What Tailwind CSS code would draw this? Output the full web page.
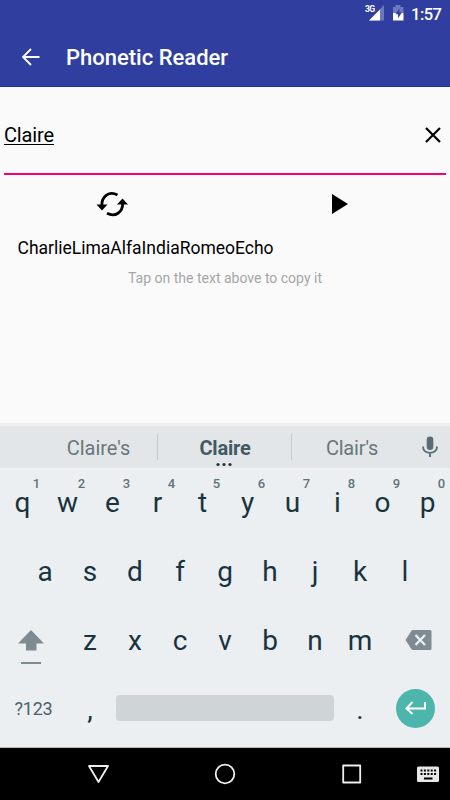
<!DOCTYPE html>
<html lang="en">
<head>
    <meta charset="UTF-8">
    <meta name="viewport" content="width=device-width, initial-scale=1.0">
    <title>Phonetic Reader</title>
    <script src="https://cdn.jsdelivr.net/npm/@tailwindcss/browser@4"></script>
</head>
<body class="font-['Roboto',sans-serif] bg-[#fafafa]">

    <div class="flex flex-col w-[450px] h-[800px] overflow-hidden">
        <!-- Status bar -->
        <div class="h-7 shrink-0 bg-[#303f9f] flex items-center justify-end text-white">
            <svg class="w-[76px] h-7" viewBox="0 0 76 28">
                <text x="30" y="12" font-size="8.5" font-weight="700" textLength="10" fill="#fff">3G</text>
                <path d="M49 5v15.500H34z" fill="#fff" fill-opacity=".3"/>
                <path d="M45 9.500v11H34z" fill="#fff"/>
                <path d="M58 7h2.500V5h5v2H68.500v6h-10.500z" fill="#fff" fill-opacity=".3"/>
                <path d="M58 13h10.500v7.500H58z" fill="#fff"/>
                <path d="M64.500 8.500l-4 5.800h2.500v4l4-5.800h-2.500z" fill="#303f9f"/>
            </svg>
            <span class="mt-px text-[16.500px] leading-7 font-medium w-[39px] -tracking-[0.500px] whitespace-nowrap">1:57</span>
        </div>

        <!-- App bar -->
        <div class="h-[59px] shrink-0 bg-[#303f9f] border-b border-[#1a329c] flex items-center text-white">
            <svg class="w-5 h-5 ml-[21px]" viewBox="0 0 20 20" fill="none" stroke="#fff" stroke-width="1.800">
                <path d="M18.500 10H2M10 2l-8 8 8 8"/>
            </svg>
            <h1 class="mt-[2px] ml-[25px] text-[22px] leading-none font-medium whitespace-nowrap">Phonetic Reader</h1>
        </div>

        <!-- Content -->
        <main class="h-[336px] shrink-0 flex flex-col">
            <div class="mx-1 h-[88px] border-b-2 border-[#f8006e] flex items-start justify-between text-black">
                <span class="mt-[36px] text-[20px] leading-6 -tracking-[0.150px] underline decoration-1 underline-offset-2">Claire</span>
                <svg class="w-4 h-4 mt-[39.500px] mr-[5px]" viewBox="0 0 16 16" fill="none" stroke="#000" stroke-width="2.200">
                    <path d="M1 1l14 14M15 1L1 15"/>
                </svg>
            </div>
            <div class="grid grid-cols-2 h-[58px]">
                <div class="flex justify-center pt-[16px] pr-[1px]">
                    <svg class="w-8 h-[26px]" viewBox="0 0 32 26">
                        <path d="M5.800 14.200C5.800 5.500 13 -0.500 21.500 4" fill="none" stroke="#000" stroke-width="2.800"/>
                        <path d="M0.500 13.500h11l-5.500 6z"/>
                        <path d="M26.700 12.500C26.700 21 19.500 26.700 11 22.300" fill="none" stroke="#000" stroke-width="2.800"/>
                        <path d="M21 13.500h11l-5.500-6z"/>
                    </svg>
                </div>
                <div class="flex justify-center pt-[19px]">
                    <svg class="w-4 h-5 ml-1" viewBox="0 0 16 20"><path d="M0 0l16 10L0 20z"/></svg>
                </div>
            </div>
            <p class="ml-[17.500px] h-[30px] leading-[30px] text-[17.500px] text-black whitespace-nowrap">CharlieLimaAlfaIndiaRomeoEcho</p>
            <p class="h-[30px] leading-[31px] text-[14px] text-[#a6a6a6] text-center">Tap on the text above to copy it</p>
        </main>

        <!-- Suggestions -->
        <div class="h-[47px] shrink-0 border-t-3 border-b-2 border-t-[#eeeff0] border-b-[#eef0f1] bg-[#e2e6e8] flex items-center text-[20px] leading-none text-[#69777c]">
            <span class="w-[118px] ml-[39px] mt-[2px] pl-px text-center">Claire's</span>
            <span class="w-px h-[26px] bg-[#c5cacd]"></span>
            <span class="relative w-[133px] mt-[2px] pl-px text-center font-bold text-[#435a64] -tracking-[0.200px]">
                Claire
                <svg class="absolute left-[58px] top-[24px] w-4 h-[5px]" viewBox="0 0 16 5" fill="#21323b">
                    <circle cx="2" cy="2.500" r="1.600"/><circle cx="8" cy="2.500" r="1.600"/><circle cx="14" cy="2.500" r="1.600"/>
                </svg>
            </span>
            <span class="w-px h-[26px] bg-[#c5cacd]"></span>
            <span class="w-[119px] mt-[2px] pl-px text-center -tracking-[0.200px]">Clair's</span>
            <svg class="w-4 h-[22px] ml-[11px]" viewBox="0 0 16 22">
                <rect x="4.700" y="0.500" width="6.600" height="13.500" rx="3.300" fill="#5b6c74"/>
                <path d="M1 10.500c0 8.500 14 8.500 14 0M8 17v4" fill="none" stroke="#5b6c74" stroke-width="1.900"/>
            </svg>
        </div>

        <!-- Keyboard -->
        <div class="h-[278px] shrink-0 bg-[#eceff1] border-b border-[#b5b8ba] text-[28px] leading-none text-[#18343f]">
            <div id="row1" class="-mt-[2px] h-[69px] grid grid-cols-10 items-center text-center"></div>
            <div id="row2" class="h-[69px] px-[22.500px] grid grid-cols-9 items-center text-center"></div>
            <div class="h-[69px] flex items-center">
                <div class="w-[67.500px] flex justify-center pr-[5px]">
                    <svg class="w-[26px] h-[34px] mt-[12px]" viewBox="0 0 26 34" fill="#7e8c91">
                        <path d="M13 0l13 13.500h-7.500V20.500h-10.500V13.500H0z"/>
                        <path d="M3 32h20v2H3z"/>
                    </svg>
                </div>
                <div id="row3" class="w-[315px] grid grid-cols-7 items-center text-center"></div>
                <svg class="w-[27px] h-5 ml-[22.500px] -mt-[2px]" viewBox="0 0 27 20">
                    <path d="M8 0h17q1.500 0 1.500 1.500v17q0 1.500-1.500 1.500H8q-1 0-1.700-1L0.500 10 6.300 1Q7 0 8 0z" fill="#7e8c91"/>
                    <path d="M10.500 5l9.500 10M20 5l-9.500 10" stroke="#eceff1" stroke-width="2.300"/>
                </svg>
            </div>
            <div class="h-[69px] flex items-center">
                <span class="w-[67px] -mt-[2px] text-center text-[18px] -tracking-[0.200px] text-[#4b616a]">?123</span>
                <span class="w-[45px] pl-px text-center">,</span>
                <span class="w-[218px] h-[26px] ml-1 -mt-[4px] rounded bg-[#cfd4d6]"></span>
                <span class="w-[45px] ml-1 pr-px text-center">.</span>
                <span class="w-[39px] h-[39px] ml-[13px] -mt-[3px] rounded-full bg-[#4db6ac] flex items-center justify-center">
                    <svg class="w-[21px] h-[14px]" viewBox="0 0 21 14" fill="none" stroke="#fff" stroke-width="2">
                        <path d="M20 1v6.500H2M7.500 1L1.500 7.500l6 5.500"/>
                    </svg>
                </span>
            </div>
        </div>

        <!-- Navigation bar -->
        <div class="h-[52px] shrink-0 bg-black">
            <svg class="w-full h-full" viewBox="0 0 450 52" fill="none" stroke="#eee" stroke-width="1.800" stroke-linejoin="round">
                <path d="M89 18h19l-9.500 16z"/>
                <circle cx="225" cy="26" r="9.300"/>
                <rect x="343.200" y="17.500" width="17" height="17"/>
                <g stroke="none">
                    <rect x="417" y="18.500" width="22" height="15.500" rx="1.500" fill="#e8e8e8"/>
                    <path d="M420.500 22.500h16M420.500 26h16" stroke="#000" stroke-width="2" stroke-dasharray="2 1.400"/>
                    <path d="M424 30.500h8.500" stroke="#000" stroke-width="2"/>
                </g>
            </svg>
        </div>
    </div>

    <script>
        const rows = { row1: 'qwertyuiop', row2: 'asdfghjkl', row3: 'zxcvbnm' };

        // Fill the letter rows, the top one also gets the number hints
        Object.keys(rows).forEach(id => {
            document.getElementById(id).innerHTML = [...rows[id]].map((letter, i) => {
                const hint = id === 'row1'
                    ? `<span class="absolute left-[30px] -top-[12px] w-[13px] text-[13px] leading-none font-medium text-[#62737b]">${(i + 1) % 10}</span>`
                    : '';
                return `<span class="relative">${letter}${hint}</span>`;
            }).join('');
        });
    </script>
</body>
</html>
